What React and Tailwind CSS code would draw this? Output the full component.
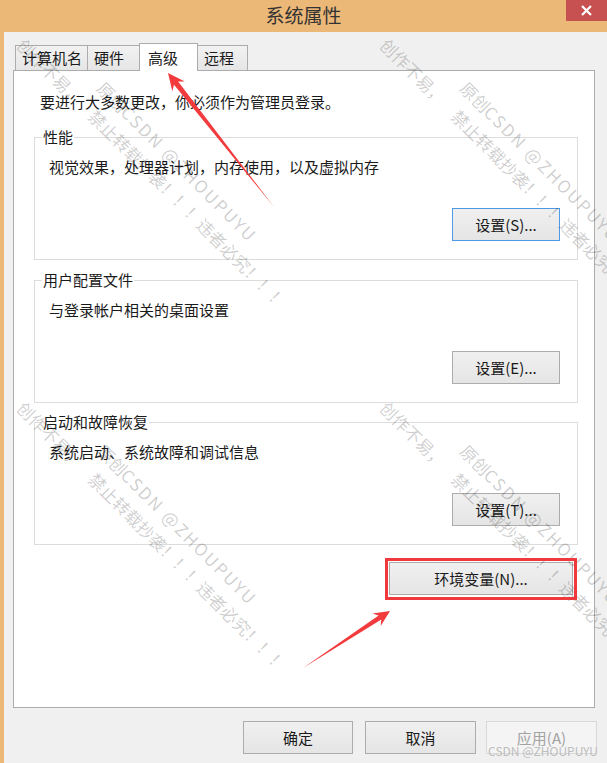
import React from 'react'

const tabs = [
  { label: '计算机名', w: 'w-[73px]' },
  { label: '硬件', w: 'w-[53px]' },
  { label: '高级', w: 'w-[59px]', active: true },
  { label: '远程', w: 'w-[51px]' },
]

const groups = [
  { title: '性能', desc: '视觉效果，处理器计划，内存使用，以及虚拟内存', btn: '设置(S)...', focused: true, mt: 'mt-[25px]' },
  { title: '用户配置文件', desc: '与登录帐户相关的桌面设置', btn: '设置(E)...', mt: 'mt-[20px]' },
  { title: '启动和故障恢复', desc: '系统启动、系统故障和调试信息', btn: '设置(T)...', mt: 'mt-[19px]' },
]

// snipaste style arrow: pointy tail, notched head
function arrowPoints(tx, ty, hx, hy, headLen = 17, headHalf = 8, shaftHalf = 2.6, notch = 4) {
  const L = Math.hypot(hx - tx, hy - ty)
  const ux = (hx - tx) / L
  const uy = (hy - ty) / L
  const nx = -uy
  const ny = ux
  const bx = hx - headLen * ux
  const by = hy - headLen * uy
  const ix = hx - (headLen - notch) * ux
  const iy = hy - (headLen - notch) * uy
  const pts = [
    [tx, ty],
    [ix + shaftHalf * nx, iy + shaftHalf * ny],
    [bx + headHalf * nx, by + headHalf * ny],
    [hx, hy],
    [bx - headHalf * nx, by - headHalf * ny],
    [ix - shaftHalf * nx, iy - shaftHalf * ny],
  ]
  return pts.map((p) => p.map((v) => v.toFixed(1)).join(',')).join(' ')
}

function Btn({ children, className = '', focused, disabled }) {
  return (
    <button
      className={`h-[33px] border leading-[20px] text-[15px] ${
        disabled
          ? 'border-[#d9d9d9] bg-[#f4f4f4] text-[#a3a3a3]'
          : focused
          ? 'border-[#4d9be8] bg-linear-to-b from-[#f0f0f0] to-[#e5e5e5] text-[#1a1a1a]'
          : 'border-[#acacac] bg-linear-to-b from-[#f0f0f0] to-[#e5e5e5] text-[#1a1a1a]'
      } ${className}`}
    >
      {children}
    </button>
  )
}

function Watermark({ pos }) {
  return (
    <div className={`absolute ${pos} origin-top-left rotate-45 flex flex-col whitespace-nowrap text-[17px] leading-[26px] text-black/20 pointer-events-none`}>
      <span className="pl-[87px]">
        原创<span className="tracking-[2px]">CSDN @ZHOUPUYU</span>
      </span>
      <span>
        创作不易，<span className="ml-[16px]">禁止转载抄袭！！！违者必究！！！</span>
      </span>
    </div>
  )
}

export default function App() {
  return (
    <div className="relative w-[607px] h-[763px] overflow-hidden bg-[#ecb878] font-['Noto_Sans_CJK_SC',sans-serif] text-[15px] text-[#1a1a1a]">
      {/* title bar */}
      <div className="grid grid-cols-[41px_1fr_41px] h-[32px]">
        <div />
        <div className="text-center text-[19px] leading-[30px] text-[#333]">系统属性</div>
        <div className="h-[21px] bg-[#c75050] flex items-center justify-center">
          <svg width="11" height="11" viewBox="0 0 11 11">
            <path d="M1 1 L10 10 M10 1 L1 10" stroke="white" strokeWidth="2.2" />
          </svg>
        </div>
      </div>

      {/* body */}
      <div className="ml-[4px] h-[731px] bg-[#f0f0f0] pt-[11px] pl-[9px] pr-[12px] flex flex-col">
        <div className="flex items-end h-[27px] pl-[2px]">
          {tabs.map((t, i) => (
            <div
              key={t.label}
              className={`${t.w} ${i > 0 ? '-ml-px' : ''} flex items-center leading-[20px] border-x border-t border-[#acacac] ${
                t.active ? 'relative z-10 h-[28px] -mb-px pl-[8px] bg-white' : 'h-[25px] pl-[6px] bg-linear-to-b from-[#f2f2f2] to-[#e6e6e6]'
              }`}
            >
              {t.label}
            </div>
          ))}
        </div>

        <div className="h-[638px] border border-[#acacac] bg-white flex flex-col">
          <p className="ml-[26px] mt-[21px] leading-[20px]">要进行大多数更改，你必须作为管理员登录。</p>

          {groups.map((g) => (
            <div key={g.title} className={`relative ${g.mt} ml-[20px] w-[544px] h-[123px] border border-[#dcdcdc] flex flex-col`}>
              <span className="absolute left-[7px] -top-[11px] bg-white px-px leading-[20px]">{g.title}</span>
              <p className="ml-[14px] mt-[19px] leading-[20px]">{g.desc}</p>
              <Btn focused={g.focused} className="self-end mr-[17px] mt-[31px] w-[108px]">
                {g.btn}
              </Btn>
            </div>
          ))}

          <Btn className="self-end mr-[21px] mt-[17px] w-[184px]">环境变量(N)...</Btn>
        </div>

        <div className="flex justify-end mt-[13px] -mr-[2px]">
          <Btn className="w-[110px]">确定</Btn>
          <Btn className="ml-[12px] w-[111px]">取消</Btn>
          <Btn disabled className="ml-[10px] w-[111px]">应用(A)</Btn>
        </div>
      </div>

      {/* watermarks */}
      <Watermark pos="left-[48px] top-[14px]" />
      <Watermark pos="left-[411px] top-[14px]" />
      <Watermark pos="left-[48px] top-[377px]" />
      <Watermark pos="left-[411px] top-[377px]" />

      {/* annotations */}
      <div className="absolute left-[385px] top-[558px] w-[192px] h-[42px] border-[3px] border-[#f0393c]" />
      <svg className="absolute left-0 top-0 pointer-events-none" width="607" height="763">
        <polygon points={arrowPoints(274, 207, 168, 73)} fill="#f23b3d" />
        <polygon points={arrowPoints(303, 668, 390, 611, 16, 7.5, 2.4)} fill="#f23b3d" />
      </svg>

      <span className="absolute right-[9px] bottom-[5px] text-[12px] leading-[14px] text-[#bdbdbd]">CSDN @ZHOUPUYU</span>
    </div>
  )
}
